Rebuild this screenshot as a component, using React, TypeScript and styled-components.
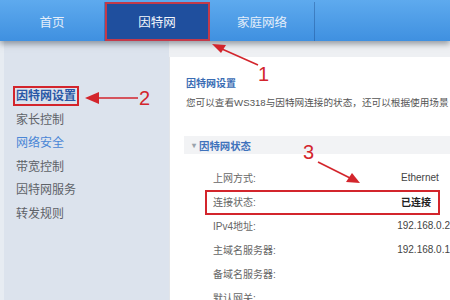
import React from "react";
import styled, { createGlobalStyle } from "styled-components";

const RED = "#d3252c";

const GlobalStyle = createGlobalStyle`
  body {
    margin: 0;
    overflow: hidden;
    font-family: "Liberation Sans", "Noto Sans CJK SC", sans-serif;
  }
`;

const tabs = [
  { label: "首页", active: false },
  { label: "因特网", active: true },
  { label: "家庭网络", active: false },
];

const menu = [
  { label: "因特网设置", tone: "current" as const },
  { label: "家长控制", tone: "plain" as const },
  { label: "网络安全", tone: "link" as const },
  { label: "带宽控制", tone: "plain" as const },
  { label: "因特网服务", tone: "plain" as const },
  { label: "转发规则", tone: "plain" as const },
];

const rows = [
  { label: "上网方式:", value: "Ethernet" },
  { label: "连接状态:", value: "已连接", strong: true, marked: true },
  { label: "IPv4地址:", value: "192.168.0.2" },
  { label: "主域名服务器:", value: "192.168.0.1" },
  { label: "备域名服务器:", value: "" },
  { label: "默认网关:", value: "" },
];

export default function App() {
  return (
    <>
      <GlobalStyle />
      <StyledPage>
        <StyledNav>
          {tabs.map((t) => (
            <StyledTab key={t.label} $active={t.active}>
              {t.label}
            </StyledTab>
          ))}
        </StyledNav>
        <StyledMain>
          <StyledSidebar>
            {menu.map((m) => (
              <StyledSideItem key={m.label} $tone={m.tone}>
                <span>{m.label}</span>
              </StyledSideItem>
            ))}
          </StyledSidebar>
          <StyledContent>
            <StyledPanel>
              <StyledTitle>因特网设置</StyledTitle>
              <StyledDesc>
                您可以查看WS318与因特网连接的状态，还可以根据使用场景
              </StyledDesc>
              <StyledSection>
                <StyledCaret>▾</StyledCaret>
                因特网状态
              </StyledSection>
              <StyledRows>
                {rows.map((r) => (
                  <StyledRow key={r.label} $marked={!!r.marked}>
                    <StyledLabel>{r.label}</StyledLabel>
                    <StyledValue $strong={!!r.strong}>{r.value}</StyledValue>
                  </StyledRow>
                ))}
              </StyledRows>
            </StyledPanel>
          </StyledContent>
        </StyledMain>

        <StyledOverlay width="450" height="300" viewBox="0 0 450 300">
          <line x1="258" y1="65" x2="222" y2="49" stroke={RED} strokeWidth="1.6" />
          <polygon points="212,44 226,45 221,53" fill={RED} />
          <line x1="138" y1="98" x2="97" y2="98" stroke={RED} strokeWidth="1.6" />
          <polygon points="85,98 99,92 99,104" fill={RED} />
          <line x1="318" y1="162" x2="350" y2="178" stroke={RED} strokeWidth="1.6" />
          <polygon points="360,183 346,182 352,173" fill={RED} />
        </StyledOverlay>
        <StyledMark style={{ left: 258, top: 62 }}>1</StyledMark>
        <StyledMark style={{ left: 139, top: 86 }}>2</StyledMark>
        <StyledMark style={{ left: 303, top: 140 }}>3</StyledMark>
      </StyledPage>
    </>
  );
}

const StyledPage = styled.div`
  position: relative;
  width: 450px;
  height: 300px;
  overflow: hidden;
  display: grid;
  grid-template-rows: 41px 1fr;
  background: #eef0f3;
`;

const StyledNav = styled.nav`
  position: relative;
  z-index: 1;
  display: flex;
  background: linear-gradient(#5eaaee, #3f90e0);
  box-shadow: 0 3px 6px rgba(60, 70, 80, 0.5);
`;

const StyledTab = styled.div<{ $active: boolean }>`
  width: 104px;
  display: flex;
  align-items: center;
  justify-content: center;
  margin-top: 2px;
  font-size: 12.5px;
  color: ${(p) => (p.$active ? "#f4f7fc" : "#e4eefa")};
  background: ${(p) => (p.$active ? "#1f4f9e" : "transparent")};
  border-right: 1px solid rgba(20, 60, 120, 0.35);
  outline: ${(p) => (p.$active ? "2px solid #c23a4a" : "none")};
  outline-offset: -2px;
`;

const StyledMain = styled.div`
  display: grid;
  grid-template-columns: 169px 1fr;
  min-height: 0;
`;

const StyledSidebar = styled.aside`
  background: #dce3ed;
  padding: 44px 0 0 16px;
  border-left: 4px solid #e7ecf2;
`;

const toneColor = {
  current: "#2a58a6",
  link: "#4a86d6",
  plain: "#5e6268",
};

const StyledSideItem = styled.div<{ $tone: keyof typeof toneColor }>`
  height: 23.5px;
  line-height: 23.5px;
  margin-left: -4px;
  font-size: 12px;
  color: ${(p) => toneColor[p.$tone]};
  font-weight: ${(p) => (p.$tone === "current" ? 600 : 400)};

  span {
    outline: ${(p) => (p.$tone === "current" ? `2px solid ${RED}` : "none")};
    outline-offset: 1px;
  }
`;

const StyledContent = styled.div`
  padding-top: 16px;
  background: #eef0f3;
  min-width: 0;
`;

const StyledPanel = styled.section`
  height: 100%;
  background: #fff;
  border-left: 1px solid #e2e5e9;
  padding: 20px 0 0 14px;
  overflow: hidden;
`;

const StyledTitle = styled.div`
  padding-left: 2px;
  font-size: 10px;
  line-height: 14px;
  color: #3a6cb4;
  font-weight: 600;
`;

const StyledDesc = styled.div`
  margin-top: 5px;
  padding-left: 2px;
  font-size: 9.65px;
  line-height: 14px;
  color: #555;
  white-space: nowrap;
`;

const StyledSection = styled.div`
  margin-top: 26px;
  height: 18px;
  display: flex;
  align-items: center;
  padding-left: 8px;
  background: #f2f3f5;
  font-size: 10.4px;
  font-weight: 700;
  color: #3f72bc;
`;

const StyledCaret = styled.span`
  font-size: 8px;
  color: #9aa3ad;
  margin-right: 3px;
`;

const StyledRows = styled.div`
  margin: 11px 0 0 21px;
`;

const StyledRow = styled.div<{ $marked: boolean }>`
  position: relative;
  height: 24px;
  display: flex;
  align-items: center;
  padding-left: 8px;
  white-space: nowrap;

  &::after {
    content: "";
    display: ${(p) => (p.$marked ? "block" : "none")};
    position: absolute;
    left: 0;
    top: 1px;
    width: 235px;
    height: 25px;
    box-sizing: border-box;
    border: 2px solid ${RED};
  }
`;

const StyledLabel = styled.span`
  width: 188px;
  font-size: 10px;
  color: #666;
`;

const StyledValue = styled.span<{ $strong: boolean }>`
  font-size: 10px;
  color: ${(p) => (p.$strong ? "#222" : "#444")};
  font-weight: ${(p) => (p.$strong ? 700 : 400)};
`;

const StyledOverlay = styled.svg`
  position: absolute;
  left: 0;
  top: 0;
  pointer-events: none;
  z-index: 2;
`;

const StyledMark = styled.span`
  position: absolute;
  z-index: 2;
  font-size: 20px;
  line-height: 24px;
  color: ${RED};
  font-family: "Liberation Sans", sans-serif;
`;
